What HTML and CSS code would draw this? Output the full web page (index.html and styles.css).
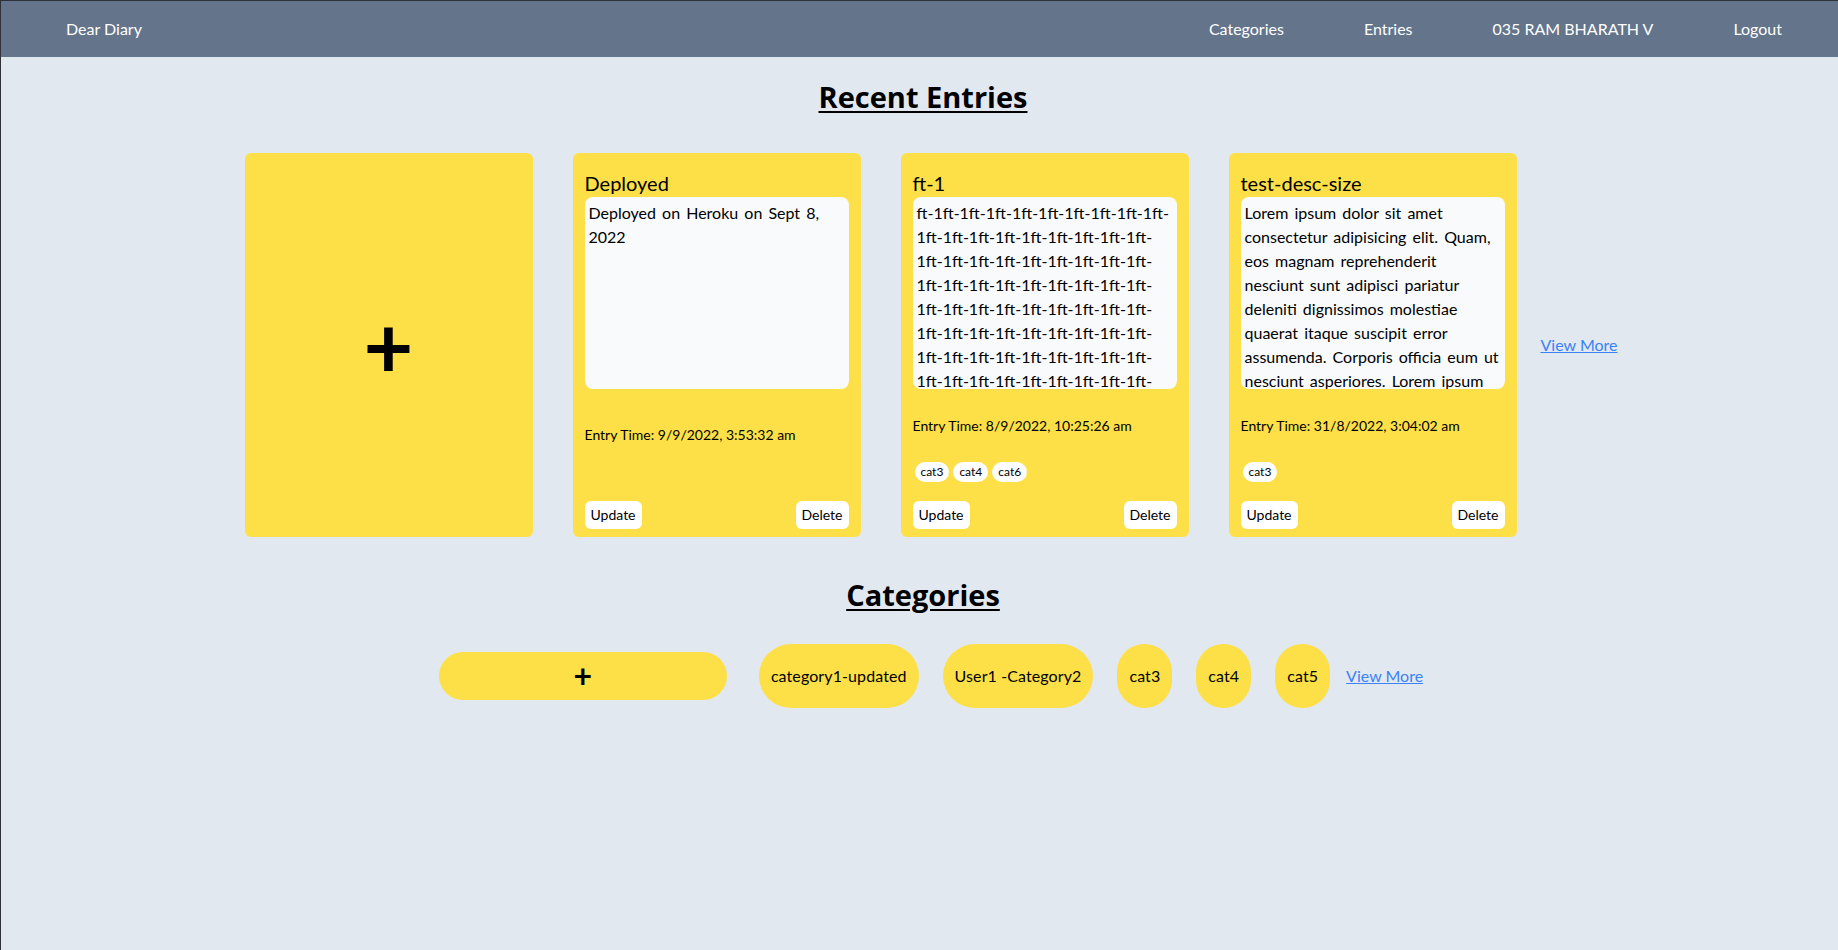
FILE: index.html
```html
<!DOCTYPE html>
<html lang="en">
<head>
<meta charset="utf-8">
<title>Dear Diary</title>
<link rel="stylesheet" href="styles.css">
</head>
<body>
<nav class="navbar">
  <a class="brand" href="#">Dear Diary</a>
  <div class="nav-links">
    <a class="nav-link" href="#">Categories</a>
    <a class="nav-link" href="#">Entries</a>
    <a class="nav-link" href="#">035 RAM BHARATH V</a>
    <a class="nav-link" href="#">Logout</a>
  </div>
</nav>
<main class="content">
  <section class="section section-entries">
    <h2 class="section-title">Recent Entries</h2>
    <div class="entries-row">
      <div class="card card-add"><span class="plus-big">+</span></div>

      <div class="card entry no-cats">
        <div class="entry-head">
          <h3 class="entry-title">Deployed</h3>
          <p class="entry-desc">Deployed on Heroku on Sept 8, 2022</p>
        </div>
        <p class="entry-time">Entry Time: 9/9/2022, 3:53:32 am</p>
        <div class="entry-actions"><button class="btn">Update</button><button class="btn">Delete</button></div>
      </div>

      <div class="card entry">
        <div class="entry-head">
          <h3 class="entry-title">ft-1</h3>
          <p class="entry-desc">ft-1ft-1ft-1ft-1ft-1ft-1ft-1ft-1ft-1ft-1ft-1ft-1ft-1ft-1ft-1ft-1ft-1ft-1ft-1ft-1ft-1ft-1ft-1ft-1ft-1ft-1ft-1ft-1ft-1ft-1ft-1ft-1ft-1ft-1ft-1ft-1ft-1ft-1ft-1ft-1ft-1ft-1ft-1ft-1ft-1ft-1ft-1ft-1ft-1ft-1ft-1ft-1ft-1ft-1ft-1ft-1ft-1ft-1ft-1ft-1ft-1ft-1ft-1ft-1ft-1ft-1ft-1ft-1ft-1ft-1ft-1ft-1ft-1ft-1ft-1ft-1ft-1ft-1ft-1ft-1ft-1ft-1ft-1ft-1ft-1ft-1ft-1ft-1ft-1ft-1ft-1ft-1ft-1</p>
        </div>
        <p class="entry-time">Entry Time: 8/9/2022, 10:25:26 am</p>
        <div class="chips"><span class="chip">cat3</span><span class="chip">cat4</span><span class="chip">cat6</span></div>
        <div class="entry-actions"><button class="btn">Update</button><button class="btn">Delete</button></div>
      </div>

      <div class="card entry">
        <div class="entry-head">
          <h3 class="entry-title">test-desc-size</h3>
          <p class="entry-desc">Lorem ipsum dolor sit amet consectetur adipisicing elit. Quam, eos magnam reprehenderit nesciunt sunt adipisci pariatur deleniti dignissimos molestiae quaerat itaque suscipit error assumenda. Corporis officia eum ut nesciunt asperiores. Lorem ipsum dolor sit amet consectetur adipisicing elit. Quam, eos magnam reprehenderit nesciunt sunt adipisci pariatur deleniti dignissimos molestiae.</p>
        </div>
        <p class="entry-time">Entry Time: 31/8/2022, 3:04:02 am</p>
        <div class="chips"><span class="chip">cat3</span></div>
        <div class="entry-actions"><button class="btn">Update</button><button class="btn">Delete</button></div>
      </div>

      <a class="view-more" href="#">View More</a>
    </div>
  </section>

  <section class="section section-categories">
    <h2 class="section-title">Categories</h2>
    <div class="categories-row">
      <div class="pill-add"><span class="plus-small">+</span></div>
      <span class="cat-pill">category1-updated</span>
      <span class="cat-pill">User1 -Category2</span>
      <span class="cat-pill">cat3</span>
      <span class="cat-pill">cat4</span>
      <span class="cat-pill">cat5</span>
      <a class="view-more" href="#">View More</a>
    </div>
  </section>
</main>
</body>
</html>
```

FILE: styles.css
```css
* { box-sizing: border-box; }

html, body { height: 100%; }

body {
  margin: 0;
  background: #e2e8f0;
  color: #000;
  font-family: "Lato", "Open Sans", sans-serif;
  font-size: 16px;
  line-height: 24px;
  border-top: 1px solid #2e3238;
  border-left: 1px solid #2e3238;
}

.navbar {
  display: flex;
  align-items: center;
  height: 56px;
  padding: 0 16px;
  background: #64748b;
}

.navbar a {
  color: #fff;
  text-decoration: none;
}

.brand { margin-left: 49px; }

.nav-links {
  display: flex;
  margin-left: auto;
}

.nav-link { margin: 0 40px; }

.content { padding-left: 7px; }

.section { display: flex; flex-direction: column; align-items: center; }

.section-entries { padding-top: 21px; }

.section-title {
  margin: 0;
  font-family: "Open Sans", "Lato", sans-serif;
  font-size: 29px;
  line-height: 38px;
  font-weight: 700;
  text-decoration: underline;
  text-decoration-thickness: 2px;
  text-underline-offset: 3px;
}

.section-entries .section-title { margin-bottom: 37px; }

.entries-row {
  display: flex;
  justify-content: center;
  align-items: center;
}

.card {
  width: 288px;
  height: 384px;
  margin: 0 20px;
  background: #fde047;
  border-radius: 6px;
}

.card-add {
  display: flex;
  align-items: center;
  justify-content: center;
}

.plus-big {
  font-size: 86px;
  line-height: 1;
  font-weight: 700;
}

.entry {
  display: flex;
  flex-direction: column;
  padding: 16px 12px 8px;
}

.entry-title {
  margin: 0;
  font-size: 20px;
  line-height: 28px;
  font-weight: 400;
}

.entry-desc {
  margin: 0;
  height: 192px;
  overflow: hidden;
  padding: 4px;
  background: #f8fafc;
  border-radius: 8px;
  word-spacing: 2px;
}

.entry-time {
  margin: 27px 0 0;
  font-size: 14px;
  line-height: 20px;
}

.no-cats .entry-time { margin-top: 36px; }

.chips {
  display: flex;
  gap: 4px;
  margin-top: 26px;
  padding-left: 2px;
}

.chip {
  background: #fff;
  border-radius: 9999px;
  padding: 2px 6px;
  font-size: 12px;
  line-height: 16px;
}

.entry-actions {
  display: flex;
  justify-content: space-between;
  margin-top: auto;
}

.btn {
  border: 0;
  background: #fff;
  border-radius: 6px;
  padding: 4px 6px;
  font-family: inherit;
  font-size: 14px;
  line-height: 20px;
  color: #000;
}

.view-more {
  margin: 0 4px;
  color: #3b82f6;
  text-decoration: underline;
}

.section-categories { margin-top: 39px; }

.section-categories .section-title { margin-bottom: 30px; }

.categories-row {
  display: flex;
  justify-content: center;
  align-items: center;
}

.pill-add {
  width: 288px;
  height: 48px;
  margin: 0 20px;
  display: flex;
  align-items: center;
  justify-content: center;
  background: #fde047;
  border-radius: 9999px;
}

.plus-small {
  font-size: 32px;
  line-height: 32px;
  font-weight: 700;
}

.cat-pill {
  margin: 0 12px;
  padding: 20px 12px;
  background: #fde047;
  border-radius: 9999px;
  letter-spacing: 0.1px;
}
```
